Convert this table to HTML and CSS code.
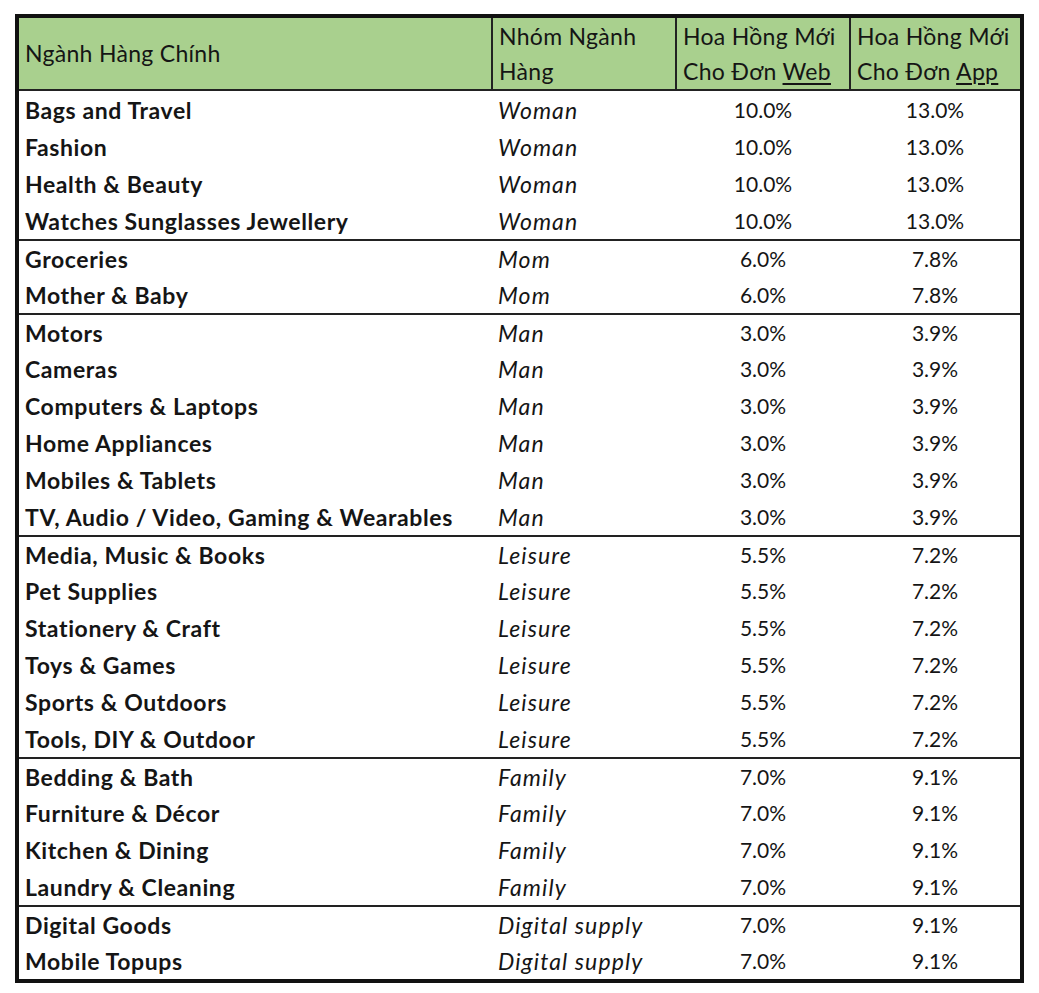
FILE: index.html
```html
<!DOCTYPE html>
<html lang="vi">
<head>
<meta charset="utf-8">
<title>Hoa Hồng Mới</title>
<link rel="stylesheet" href="styles.css">
</head>
<body>
<div class="page">
<table class="rates">
  <colgroup>
    <col class="c1"><col class="c2"><col class="c3"><col class="c4">
  </colgroup>
  <thead>
    <tr>
      <th>Ngành Hàng Chính</th>
      <th>Nhóm Ngành<br>Hàng</th>
      <th>Hoa Hồng Mới<br>Cho Đơn <u>Web</u></th>
      <th>Hoa Hồng Mới<br>Cho Đơn <u>App</u></th>
    </tr>
  </thead>
  <tbody>
    <tr><td class="name">Bags and Travel</td><td class="grp">Woman</td><td class="val">10.0%</td><td class="val">13.0%</td></tr>
    <tr><td class="name">Fashion</td><td class="grp">Woman</td><td class="val">10.0%</td><td class="val">13.0%</td></tr>
    <tr><td class="name">Health &amp; Beauty</td><td class="grp">Woman</td><td class="val">10.0%</td><td class="val">13.0%</td></tr>
    <tr><td class="name">Watches Sunglasses Jewellery</td><td class="grp">Woman</td><td class="val">10.0%</td><td class="val">13.0%</td></tr>
  </tbody>
  <tbody>
    <tr><td class="name">Groceries</td><td class="grp">Mom</td><td class="val">6.0%</td><td class="val">7.8%</td></tr>
    <tr><td class="name">Mother &amp; Baby</td><td class="grp">Mom</td><td class="val">6.0%</td><td class="val">7.8%</td></tr>
  </tbody>
  <tbody>
    <tr><td class="name">Motors</td><td class="grp">Man</td><td class="val">3.0%</td><td class="val">3.9%</td></tr>
    <tr><td class="name">Cameras</td><td class="grp">Man</td><td class="val">3.0%</td><td class="val">3.9%</td></tr>
    <tr><td class="name">Computers &amp; Laptops</td><td class="grp">Man</td><td class="val">3.0%</td><td class="val">3.9%</td></tr>
    <tr><td class="name">Home Appliances</td><td class="grp">Man</td><td class="val">3.0%</td><td class="val">3.9%</td></tr>
    <tr><td class="name">Mobiles &amp; Tablets</td><td class="grp">Man</td><td class="val">3.0%</td><td class="val">3.9%</td></tr>
    <tr><td class="name">TV, Audio / Video, Gaming &amp; Wearables</td><td class="grp">Man</td><td class="val">3.0%</td><td class="val">3.9%</td></tr>
  </tbody>
  <tbody>
    <tr><td class="name">Media, Music &amp; Books</td><td class="grp">Leisure</td><td class="val">5.5%</td><td class="val">7.2%</td></tr>
    <tr><td class="name">Pet Supplies</td><td class="grp">Leisure</td><td class="val">5.5%</td><td class="val">7.2%</td></tr>
    <tr><td class="name">Stationery &amp; Craft</td><td class="grp">Leisure</td><td class="val">5.5%</td><td class="val">7.2%</td></tr>
    <tr><td class="name">Toys &amp; Games</td><td class="grp">Leisure</td><td class="val">5.5%</td><td class="val">7.2%</td></tr>
    <tr><td class="name">Sports &amp; Outdoors</td><td class="grp">Leisure</td><td class="val">5.5%</td><td class="val">7.2%</td></tr>
    <tr><td class="name">Tools, DIY &amp; Outdoor</td><td class="grp">Leisure</td><td class="val">5.5%</td><td class="val">7.2%</td></tr>
  </tbody>
  <tbody>
    <tr><td class="name">Bedding &amp; Bath</td><td class="grp">Family</td><td class="val">7.0%</td><td class="val">9.1%</td></tr>
    <tr><td class="name">Furniture &amp; Décor</td><td class="grp">Family</td><td class="val">7.0%</td><td class="val">9.1%</td></tr>
    <tr><td class="name">Kitchen &amp; Dining</td><td class="grp">Family</td><td class="val">7.0%</td><td class="val">9.1%</td></tr>
    <tr><td class="name">Laundry &amp; Cleaning</td><td class="grp">Family</td><td class="val">7.0%</td><td class="val">9.1%</td></tr>
  </tbody>
  <tbody>
    <tr><td class="name">Digital Goods</td><td class="grp">Digital supply</td><td class="val">7.0%</td><td class="val">9.1%</td></tr>
    <tr><td class="name">Mobile Topups</td><td class="grp">Digital supply</td><td class="val">7.0%</td><td class="val">9.1%</td></tr>
  </tbody>
</table>
</div>
</body>
</html>
```

FILE: styles.css
```css
html, body {
  margin: 0;
  padding: 0;
  background: #ffffff;
}

.page {
  padding: 14px 0 0 15px;
}

.rates {
  border-collapse: collapse;
  table-layout: fixed;
  width: 1005px;
  border: 4px solid #111;
  font-family: Lato, "Open Sans", "Liberation Sans", sans-serif;
  font-size: 23px;
  letter-spacing: 0.3px;
  color: #151515;
}

.c1 { width: 475px; }
.c2 { width: 184px; }
.c3 { width: 174px; }
.c4 { width: 172px; }

.rates th {
  background: #a9d08e;
  font-weight: 400;
  text-align: left;
  vertical-align: middle;
  height: 71px;
  padding: 0 6px;
  line-height: 35px;
  border-left: 2px solid #222;
  border-bottom: 2px solid #222;
  white-space: nowrap;
  overflow: hidden;
}

.rates th:first-child {
  border-left: none;
}

.rates th u {
  text-decoration-thickness: 2px;
  text-underline-offset: 3px;
}

.rates tbody {
  border-top: 2px solid #222;
}

.rates td {
  height: 36px;
  padding: 1px 6px 0;
  line-height: 36px;
  white-space: nowrap;
}

.rates tbody + tbody tr:first-child td {
  height: 34px;
  line-height: 34px;
}

.name {
  font-weight: 700;
  letter-spacing: 0.6px;
}

.grp {
  font-style: italic;
  letter-spacing: 1.1px;
}

.val {
  text-align: center;
  font-size: 21px;
  letter-spacing: 0;
  padding-left: 10px;
}
```
